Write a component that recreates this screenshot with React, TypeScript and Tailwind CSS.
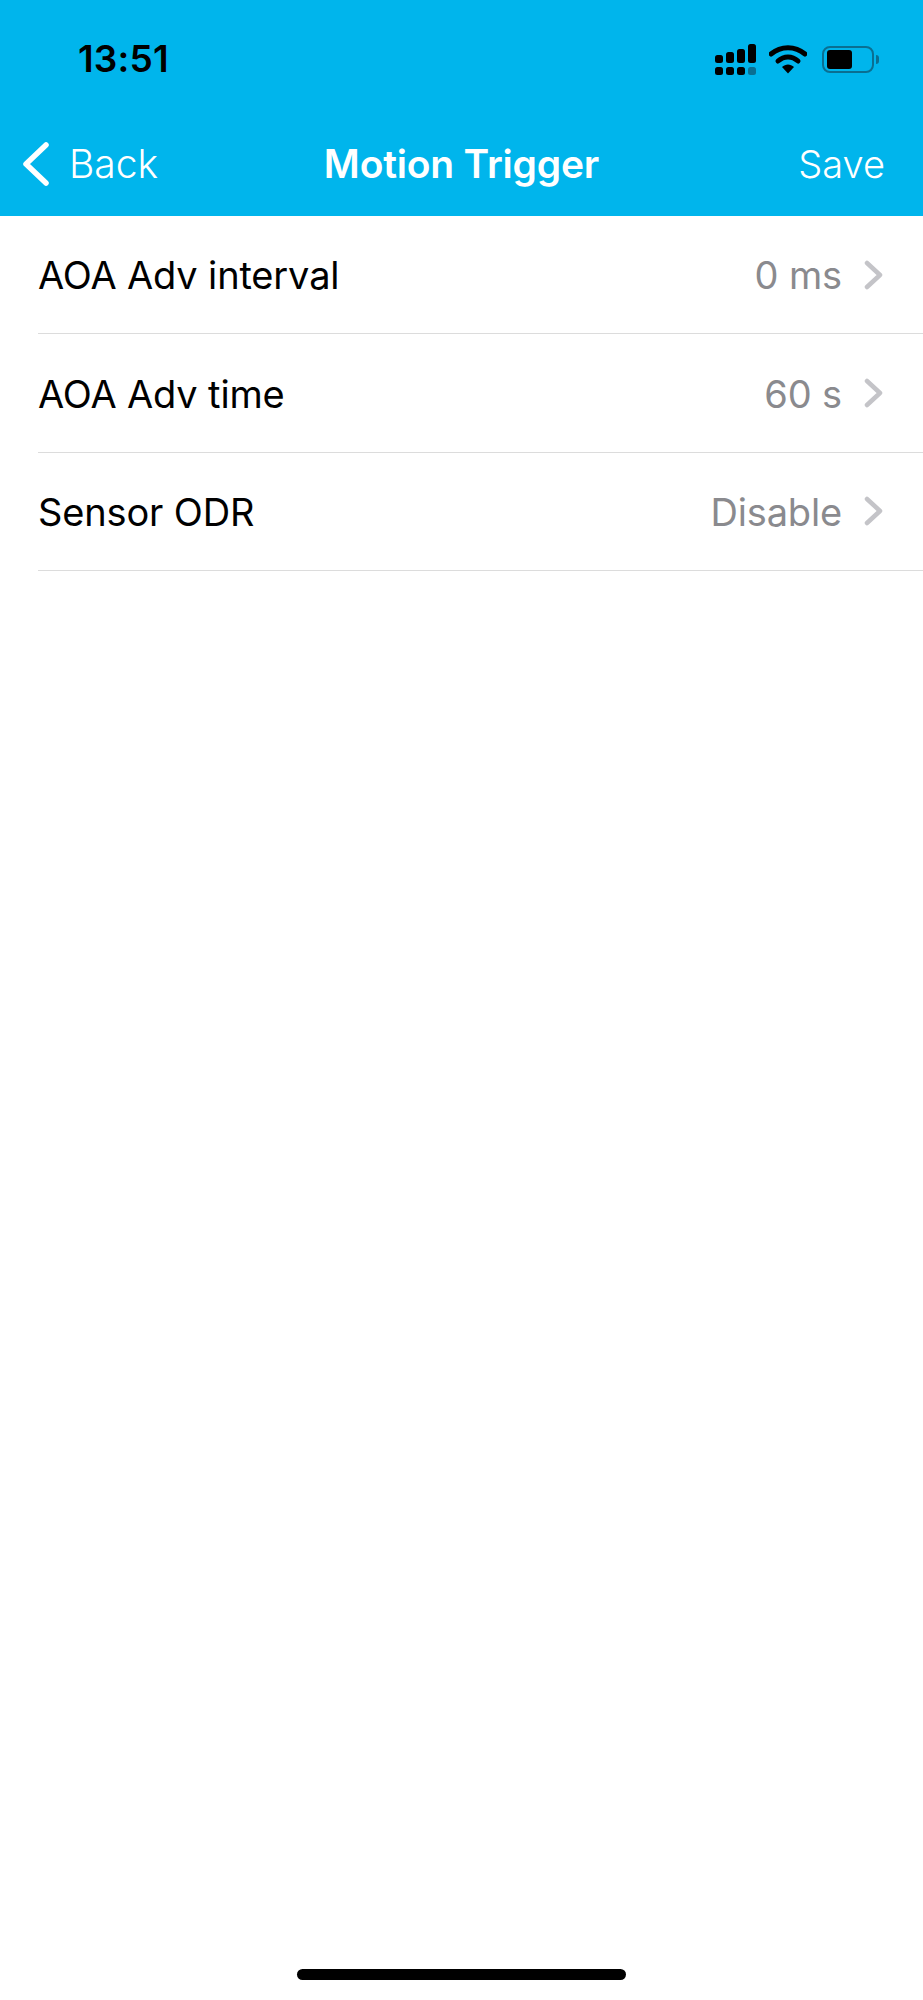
const rows = [
  { label: 'AOA Adv interval', value: '0 ms' },
  { label: 'AOA Adv time', value: '60 s' },
  { label: 'Sensor ODR', value: 'Disable' },
]

function StatusIcons() {
  return (
    <div className="flex items-center">
      <svg width="41" height="31" viewBox="0 0 41 31" className="text-black">
        <rect x="0" y="11" width="8" height="8" rx="2.5" fill="currentColor" />
        <rect x="11" y="8" width="8" height="11" rx="2.5" fill="currentColor" />
        <rect x="22" y="5" width="8" height="14" rx="2.5" fill="currentColor" />
        <rect x="33" y="0" width="8" height="19" rx="2.5" fill="currentColor" />
        <rect x="0" y="23" width="8" height="8" rx="2.5" fill="currentColor" />
        <rect x="11" y="23" width="8" height="8" rx="2.5" fill="currentColor" />
        <rect x="22" y="23" width="8" height="8" rx="2.5" fill="currentColor" />
        <rect x="33" y="23" width="8" height="8" rx="2.5" fill="#0a6f92" />
      </svg>
      <svg width="38" height="30" viewBox="0 0 38 30" className="ml-[13px]">
        <path d="M2 10 C12 1.5 26 1.5 36 10" fill="none" stroke="#000" strokeWidth="5" strokeLinecap="round" />
        <path d="M9 17 C15 11.5 23 11.5 29 17" fill="none" stroke="#000" strokeWidth="5" strokeLinecap="round" />
        <path d="M13 23 C16.5 19.5 21.5 19.5 25 23 L19 29.5 Z" fill="#000" />
      </svg>
      <div className="ml-[15px] flex items-center">
        <div className="flex h-[27px] w-[52px] items-center rounded-[8px] border-[2px] border-[#0a6f92] px-[3px]">
          <div className="h-[19px] w-[25px] rounded-[3px] bg-black" />
        </div>
        <div className="ml-[2px] h-[9px] w-[3px] rounded-r-full bg-[#0a6f92]" />
      </div>
    </div>
  )
}

function Row({ label, value }: { label: string; value: string }) {
  return (
    <div className="flex h-[118.4px] items-center border-b border-[#dcdcdc] pr-[39px]">
      <span className="flex-1 pt-[2px] text-[38px] tracking-[-0.15px] text-black">{label}</span>
      <span className="pt-[2px] text-[38px] tracking-[-0.15px] text-[#8a8a8e]">{value}</span>
      <svg width="20" height="30" viewBox="0 0 20 30" className="ml-[22px]">
        <path d="M3 3 L16 15 L3 27" fill="none" stroke="#c4c4c8" strokeWidth="4.5" strokeLinecap="round" strokeLinejoin="round" />
      </svg>
    </div>
  )
}

export default function App() {
  return (
    <div className="relative flex h-[2000px] w-[923px] flex-col bg-white font-['Inter','Liberation_Sans',sans-serif]">
      <header className="h-[216px] bg-[#00b5ec]">
        <div className="flex h-[118px] items-center justify-between pl-[78px] pr-[44px]">
          <span className="text-[37px] font-semibold tracking-[0.2px] text-black">13:51</span>
          <StatusIcons />
        </div>
        <div className="grid h-[92px] grid-cols-[1fr_auto_1fr] items-center text-white">
          <div className="flex items-center pl-[20px]">
            <svg width="32" height="48" viewBox="0 0 32 48">
              <path d="M26 5 L6 24 L26 43" fill="none" stroke="#fff" strokeWidth="5.5" strokeLinecap="round" strokeLinejoin="round" />
            </svg>
            <span className="ml-[17px] text-[39px] font-light">Back</span>
          </div>
          <span className="text-[39px] font-semibold tracking-[-0.2px]">Motion Trigger</span>
          <span className="pr-[38px] text-right text-[38px] font-light">Save</span>
        </div>
      </header>
      <main className="pl-[38px]">
        {rows.map((r) => (
          <Row key={r.label} label={r.label} value={r.value} />
        ))}
      </main>
      <div className="absolute bottom-[20px] left-[297px] h-[11px] w-[329px] rounded-full bg-black" />
    </div>
  )
}
